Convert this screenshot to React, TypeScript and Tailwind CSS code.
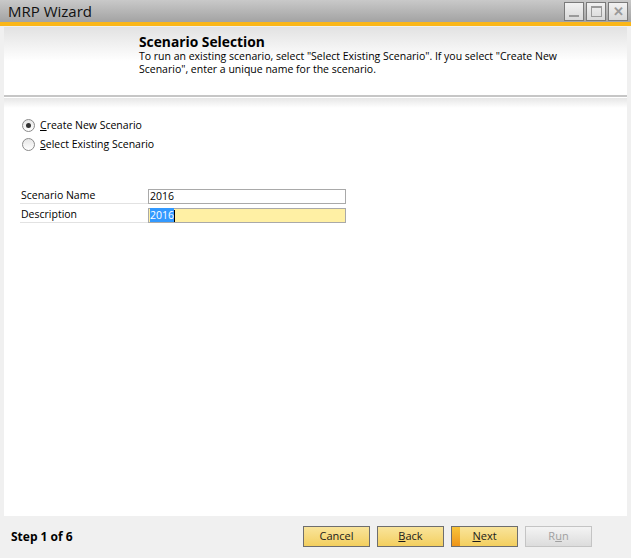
import React from 'react'

const FONT = { fontFamily: '"Segoe UI", "Open Sans", "Liberation Sans", sans-serif' }

function Radio({ checked }: { checked?: boolean }) {
  return (
    <span className="w-[13px] h-[13px] rounded-full border border-[#8a8a8a] bg-gradient-to-b from-[#e6e6e6] to-white flex items-center justify-center">
      {checked && <span className="w-[5px] h-[5px] rounded-full bg-[#333]" />}
    </span>
  )
}

function WinButton({ children }: { children: React.ReactNode }) {
  return (
    <div className="w-[20px] h-[19px] border border-[#7a7a7a] bg-gradient-to-b from-[#f2f2f2] to-[#d8d8d8] flex items-center justify-center">
      {children}
    </div>
  )
}

function Btn({ label, u, next, disabled }: { label: string; u?: number; next?: boolean; disabled?: boolean }) {
  const hasU = u !== undefined
  const pre = hasU ? label.slice(0, u) : label
  const ch = hasU ? label.slice(u, u + 1) : ''
  const post = hasU ? label.slice(u + 1) : ''
  return (
    <button
      className={`relative w-[67px] h-[21px] text-[11px] leading-none flex items-center justify-center pb-[2px] border ${
        disabled
          ? 'border-[#c4c4c4] bg-gradient-to-b from-[#f4f4f4] to-[#dcdcdc] text-[#a0a0a0]'
          : 'border-[#6e6e6e] bg-gradient-to-b from-[#f9e49a] to-[#f3cf5e] text-[#1a1a1a]'
      }`}
    >
      {next && <span className="absolute left-0 top-0 bottom-0 w-[8px] bg-gradient-to-b from-[#f8c43a] to-[#ee9418]" />}
      <span>
        {pre}
        {ch && <span className="underline">{ch}</span>}
        {post}
      </span>
    </button>
  )
}

export default function App() {
  return (
    <div className="w-[631px] h-[558px] bg-[#f0f0f0] flex flex-col text-[#000]" style={FONT}>
      {/* title bar */}
      <div className="h-[22px] bg-gradient-to-b from-[#c9c9c9] to-[#a3a3a3] flex items-center justify-between pl-[8px] pr-[3px]">
        <span className="text-[15px] text-[#111] leading-none">MRP Wizard</span>
        <div className="flex gap-[2px] mt-[1px]">
          <WinButton>
            <span className="w-[10px] h-[2px] bg-[#9a9a9a] mt-[9px]" />
          </WinButton>
          <WinButton>
            <span className="w-[11px] h-[11px] border border-[#9a9a9a] border-t-2" />
          </WinButton>
          <WinButton>
            <span className="text-[#9a9a9a] text-[13px] font-bold leading-none">✕</span>
          </WinButton>
        </div>
      </div>
      <div className="h-[4px] bg-[#fab618]" />

      {/* body */}
      <div className="flex-1 flex flex-col px-[4px] pt-[1px]">
        <div className="flex-1 bg-white flex flex-col">
          {/* header */}
          <div className="h-[68px] bg-gradient-to-b from-[#e2e2e2] via-white to-white pl-[135px] pt-[8px]">
            <div className="text-[13.8px] font-bold leading-[14px]">Scenario Selection</div>
            <div className="text-[10.5px] leading-[13px] w-[440px] mt-[1px]">
              To run an existing scenario, select "Select Existing Scenario". If you select "Create New Scenario", enter a unique name for the scenario.
            </div>
          </div>
          <div className="h-[2px] bg-[#c6c6c6]" />
          <div className="h-[10px] bg-gradient-to-b from-[#e6e6e6] to-white mt-[1px]" />

          {/* options */}
          <div className="pl-[18px] pt-[11px] flex flex-col gap-[6px] text-[10.5px]">
            <label className="flex items-center gap-[5px] h-[13px]">
              <Radio checked />
              <span><span className="underline">C</span>reate New Scenario</span>
            </label>
            <label className="flex items-center gap-[5px] h-[13px]">
              <Radio />
              <span><span className="underline">S</span>elect Existing Scenario</span>
            </label>
          </div>

          {/* fields */}
          <div className="pl-[16px] pt-[38px] flex flex-col gap-[4px] text-[10.5px]">
            <div className="flex items-end h-[15px]">
              <div className="w-[128px] h-[16px] border-b border-[#e2e2e2] pl-[1px] leading-[15px]">Scenario Name</div>
              <div className="w-[198px] h-[15px] border border-[#a9a9a9] bg-white leading-[13px] pl-[1px]">2016</div>
            </div>
            <div className="flex items-end h-[15px]">
              <div className="w-[128px] h-[16px] border-b border-[#e2e2e2] pl-[1px] leading-[15px]">Description</div>
              <div className="w-[198px] h-[15px] border border-[#a9a9a9] bg-[#fff0a4] leading-[13px] pl-[1px]">
                <span className="bg-[#3399ff] text-white">2016</span>
                <span className="inline-block w-[1px] h-[12px] bg-black align-middle" />
              </div>
            </div>
          </div>
        </div>

        {/* footer */}
        <div className="h-[42px] flex items-center">
          <span className="text-[12px] font-bold pl-[7px]">Step 1 of 6</span>
          <div className="ml-auto mr-[35px] flex gap-[7px] -mt-[1px]">
            <Btn label="Cancel" />
            <Btn label="Back" u={0} />
            <Btn label="Next" u={0} next />
            <Btn label="Run" u={1} disabled />
          </div>
        </div>
      </div>
    </div>
  )
}
